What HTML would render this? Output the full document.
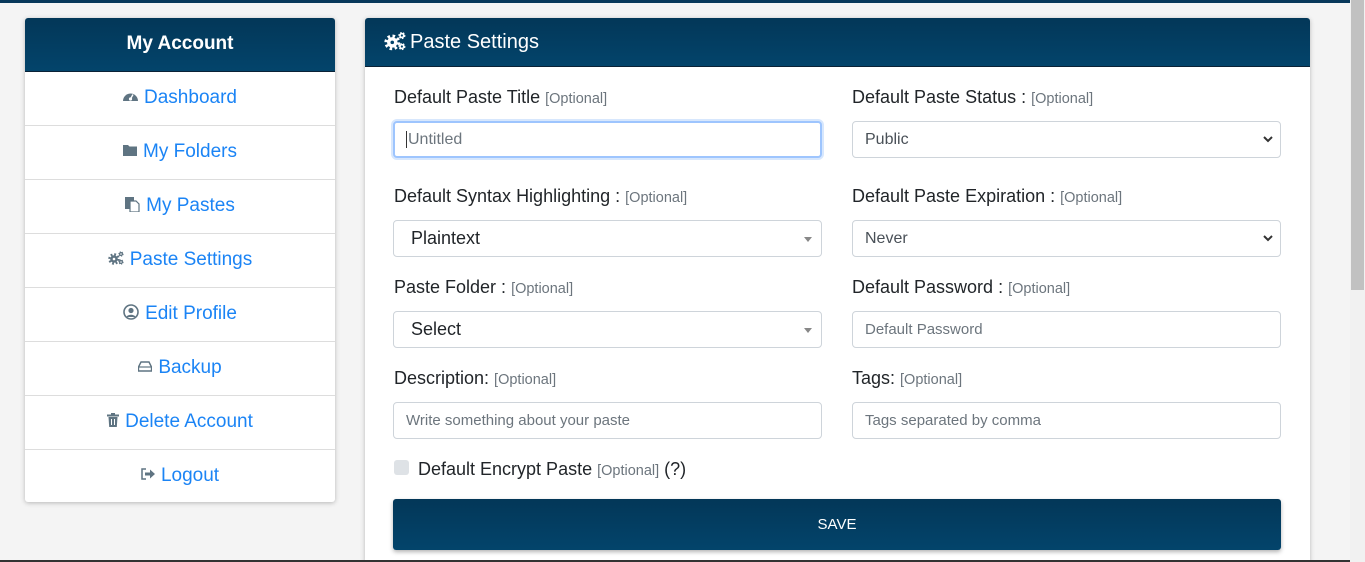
<!DOCTYPE html><html><head><style>
*{box-sizing:border-box;margin:0;padding:0}
html,body{width:1365px;height:562px;overflow:hidden}
body{background:#f4f4f4;font-family:"Liberation Sans",sans-serif;position:relative}
.topbar{position:absolute;left:0;top:0;width:1350px;height:3px;background:#07385a}
.bot{position:absolute;left:0;top:560px;width:1350px;height:2px;background:#333}
.sb{position:absolute;left:1350px;top:0;width:15px;height:562px;background:#f1f1f1}
.thumb{position:absolute;left:1351px;top:0;width:13px;height:290px;background:#c1c1c1}
.side{position:absolute;left:25px;top:18px;width:310px;height:484px;background:#fff;box-shadow:0 1px 5px rgba(0,0,0,.25);border-radius:3px;overflow:hidden}
.sh{height:54px;background:linear-gradient(#033758,#03446b);color:#fff;font-weight:bold;font-size:19px;text-align:center;line-height:52px;border-bottom:1px solid #0a2236}
.it{height:54px;border-bottom:1px solid #ddd;text-align:center;line-height:52px;font-size:19px;color:#1b84f5}
.it:last-child{border-bottom:0}
.ic{display:inline-block;vertical-align:middle;margin-right:6px;margin-top:-3px}
.main{position:absolute;left:365px;top:18px;width:945px;height:544px;background:#fff;box-shadow:0 1px 5px rgba(0,0,0,.25);border-radius:3px 3px 0 0;overflow:hidden}
.mh{height:49px;background:linear-gradient(#033758,#03446b);color:#fff;font-size:20px;line-height:48px;padding-left:19px;border-bottom:1px solid #0a2236}
.lb{position:absolute;font-size:18px;color:#212529;white-space:nowrap}
.lb small{font-size:14.5px;color:#6c757d}
.in{position:absolute;width:429px;height:37px;border:1px solid #ced4da;border-radius:4px;font-size:16px;color:#6c757d;line-height:35px;padding-left:12px;background:#fff}
.in.s{color:#212529;font-size:18px;padding-left:17px}
.in.n{color:#495057;font-size:16px}
.arr{position:absolute;right:9px;top:16px;width:0;height:0;border-left:4px solid transparent;border-right:4px solid transparent;border-top:5px solid #888}
.chev{position:absolute;right:6px;top:11px}
.btn{position:absolute;left:28px;top:481px;width:888px;height:51px;background:linear-gradient(#033758,#03446b);border-radius:3px;color:#fff;text-align:center;line-height:51px;font-size:15px;box-shadow:0 2px 4px rgba(0,0,0,.3)}
</style></head><body>
<div class="topbar"></div>
<div class="side">
<div class="sh">My Account</div>
<div class="it"><svg class="ic" width="15" height="12" viewBox="0 0 15 12"><path d="M0 11A7.5 7.5 0 0 1 15 11Z" fill="#5f7482"/><circle cx="7.5" cy="9" r="1.6" fill="#fff"/><path d="M7.5 9L10 4.5" stroke="#fff" stroke-width="1.3"/></svg>Dashboard</div>
<div class="it"><svg class="ic" width="14" height="12" viewBox="0 0 14 12"><path d="M0 1h5l1.5 1.5H14V12H0Z" fill="#5f7482"/></svg>My Folders</div>
<div class="it"><svg class="ic" width="15" height="15" viewBox="0 0 15 15"><rect x="0" y="0" width="9" height="12" fill="#5f7482"/><path d="M5 4h6l3 3v8H5Z" fill="#fff" stroke="#5f7482" stroke-width="1.2"/></svg>My Pastes</div>
<div class="it"><svg class="ic" width="16" height="14" viewBox="0 0 16 14"><circle cx="6" cy="8" r="4.5" fill="none" stroke="#5f7482" stroke-width="2.5" stroke-dasharray="1.8 1.74"/><circle cx="6" cy="8" r="3.8" fill="#5f7482"/><circle cx="6" cy="8" r="1.3" fill="#fff"/><circle cx="13" cy="3" r="2" fill="#5f7482" stroke="#5f7482" stroke-width="1.2" stroke-dasharray="1 1"/><circle cx="13" cy="3" r=".8" fill="#fff"/><circle cx="13" cy="11" r="2" fill="#5f7482" stroke="#5f7482" stroke-width="1.2" stroke-dasharray="1 1"/><circle cx="13" cy="11" r=".8" fill="#fff"/></svg>Paste Settings</div>
<div class="it"><svg class="ic" width="16" height="16" viewBox="0 0 16 16"><circle cx="8" cy="8" r="7" fill="none" stroke="#5f7482" stroke-width="1.6"/><circle cx="8" cy="6.5" r="2.6" fill="#5f7482"/><path d="M3.5 13c1-3 8-3 9 0" fill="#5f7482"/></svg>Edit Profile</div>
<div class="it"><svg class="ic" width="14" height="11" viewBox="0 0 14 11"><path d="M3 1h8l2.5 5v4h-13V6Z" fill="none" stroke="#5f7482" stroke-width="1.4"/><path d="M1 6h12" stroke="#5f7482" stroke-width="1.2"/></svg>Backup</div>
<div class="it"><svg class="ic" width="12" height="14" viewBox="0 0 12 14"><rect x="0" y="1.5" width="12" height="2" fill="#5f7482"/><rect x="4" y="0" width="4" height="2" fill="#5f7482"/><path d="M1.5 4h9l-.7 10H2.2Z" fill="#5f7482"/><path d="M4.5 6v6M7.5 6v6" stroke="#fff"/></svg>Delete Account</div>
<div class="it"><svg class="ic" width="14" height="12" viewBox="0 0 14 12"><path d="M5 1H1v10h4" fill="none" stroke="#5f7482" stroke-width="1.5"/><path d="M4 4.5h5V1.5L14 6 9 10.5V7.5H4Z" fill="#5f7482"/></svg>Logout</div>
</div>
<div class="main">
<div class="mh"><svg width="22" height="20" viewBox="0 0 16 14" style="vertical-align:middle;margin:-4px 4px 0 0"><circle cx="6" cy="8" r="4.5" fill="none" stroke="#fff" stroke-width="2.5" stroke-dasharray="1.8 1.74"/><circle cx="6" cy="8" r="3.8" fill="#fff"/><circle cx="6" cy="8" r="1.3" fill="#03446b"/><circle cx="13" cy="3" r="2" fill="#fff" stroke="#fff" stroke-width="1.2" stroke-dasharray="1 1"/><circle cx="13" cy="3" r=".8" fill="#03446b"/><circle cx="13" cy="11" r="2" fill="#fff" stroke="#fff" stroke-width="1.2" stroke-dasharray="1 1"/><circle cx="13" cy="11" r=".8" fill="#03446b"/></svg>Paste Settings</div>
<div class="lb" style="left:29px;top:69px">Default Paste Title <small>[Optional]</small></div>
<div class="in" style="left:28px;top:103px;border:2px solid #9ec5fe;box-shadow:0 0 0 2px #d7e7fd;line-height:33px;padding-left:11px"><span style="border-left:1px solid #333;padding-left:1px">Untitled</span></div>
<div class="lb" style="left:487px;top:69px">Default Paste Status : <small>[Optional]</small></div>
<div class="in n" style="left:487px;top:103px">Public<svg class="chev" width="12" height="12" viewBox="0 0 12 12"><path d="M2 4l4 4 4-4" fill="none" stroke="#333" stroke-width="2"/></svg></div>
<div class="lb" style="left:29px;top:168px">Default Syntax Highlighting : <small>[Optional]</small></div>
<div class="in s" style="left:28px;top:202px">Plaintext<span class="arr"></span></div>
<div class="lb" style="left:487px;top:168px">Default Paste Expiration : <small>[Optional]</small></div>
<div class="in n" style="left:487px;top:202px">Never<svg class="chev" width="12" height="12" viewBox="0 0 12 12"><path d="M2 4l4 4 4-4" fill="none" stroke="#333" stroke-width="2"/></svg></div>
<div class="lb" style="left:29px;top:259px">Paste Folder : <small>[Optional]</small></div>
<div class="in s" style="left:28px;top:293px">Select<span class="arr"></span></div>
<div class="lb" style="left:487px;top:259px">Default Password : <small>[Optional]</small></div>
<div class="in" style="left:487px;top:293px;font-size:15px">Default Password</div>
<div class="lb" style="left:29px;top:350px">Description: <small>[Optional]</small></div>
<div class="in" style="left:28px;top:384px;font-size:15px">Write something about your paste</div>
<div class="lb" style="left:487px;top:350px">Tags: <small>[Optional]</small></div>
<div class="in" style="left:487px;top:384px;font-size:15px">Tags separated by comma</div>
<div style="position:absolute;left:29px;top:442px;width:15px;height:15px;background:#dee2e6;border-radius:3px"></div>
<div class="lb" style="left:53px;top:441px">Default Encrypt Paste <small>[Optional]</small> (?)</div>
<div class="btn">SAVE</div>
</div>
<div class="sb"></div><div class="thumb"></div>
<div class="bot"></div>
</body></html>
